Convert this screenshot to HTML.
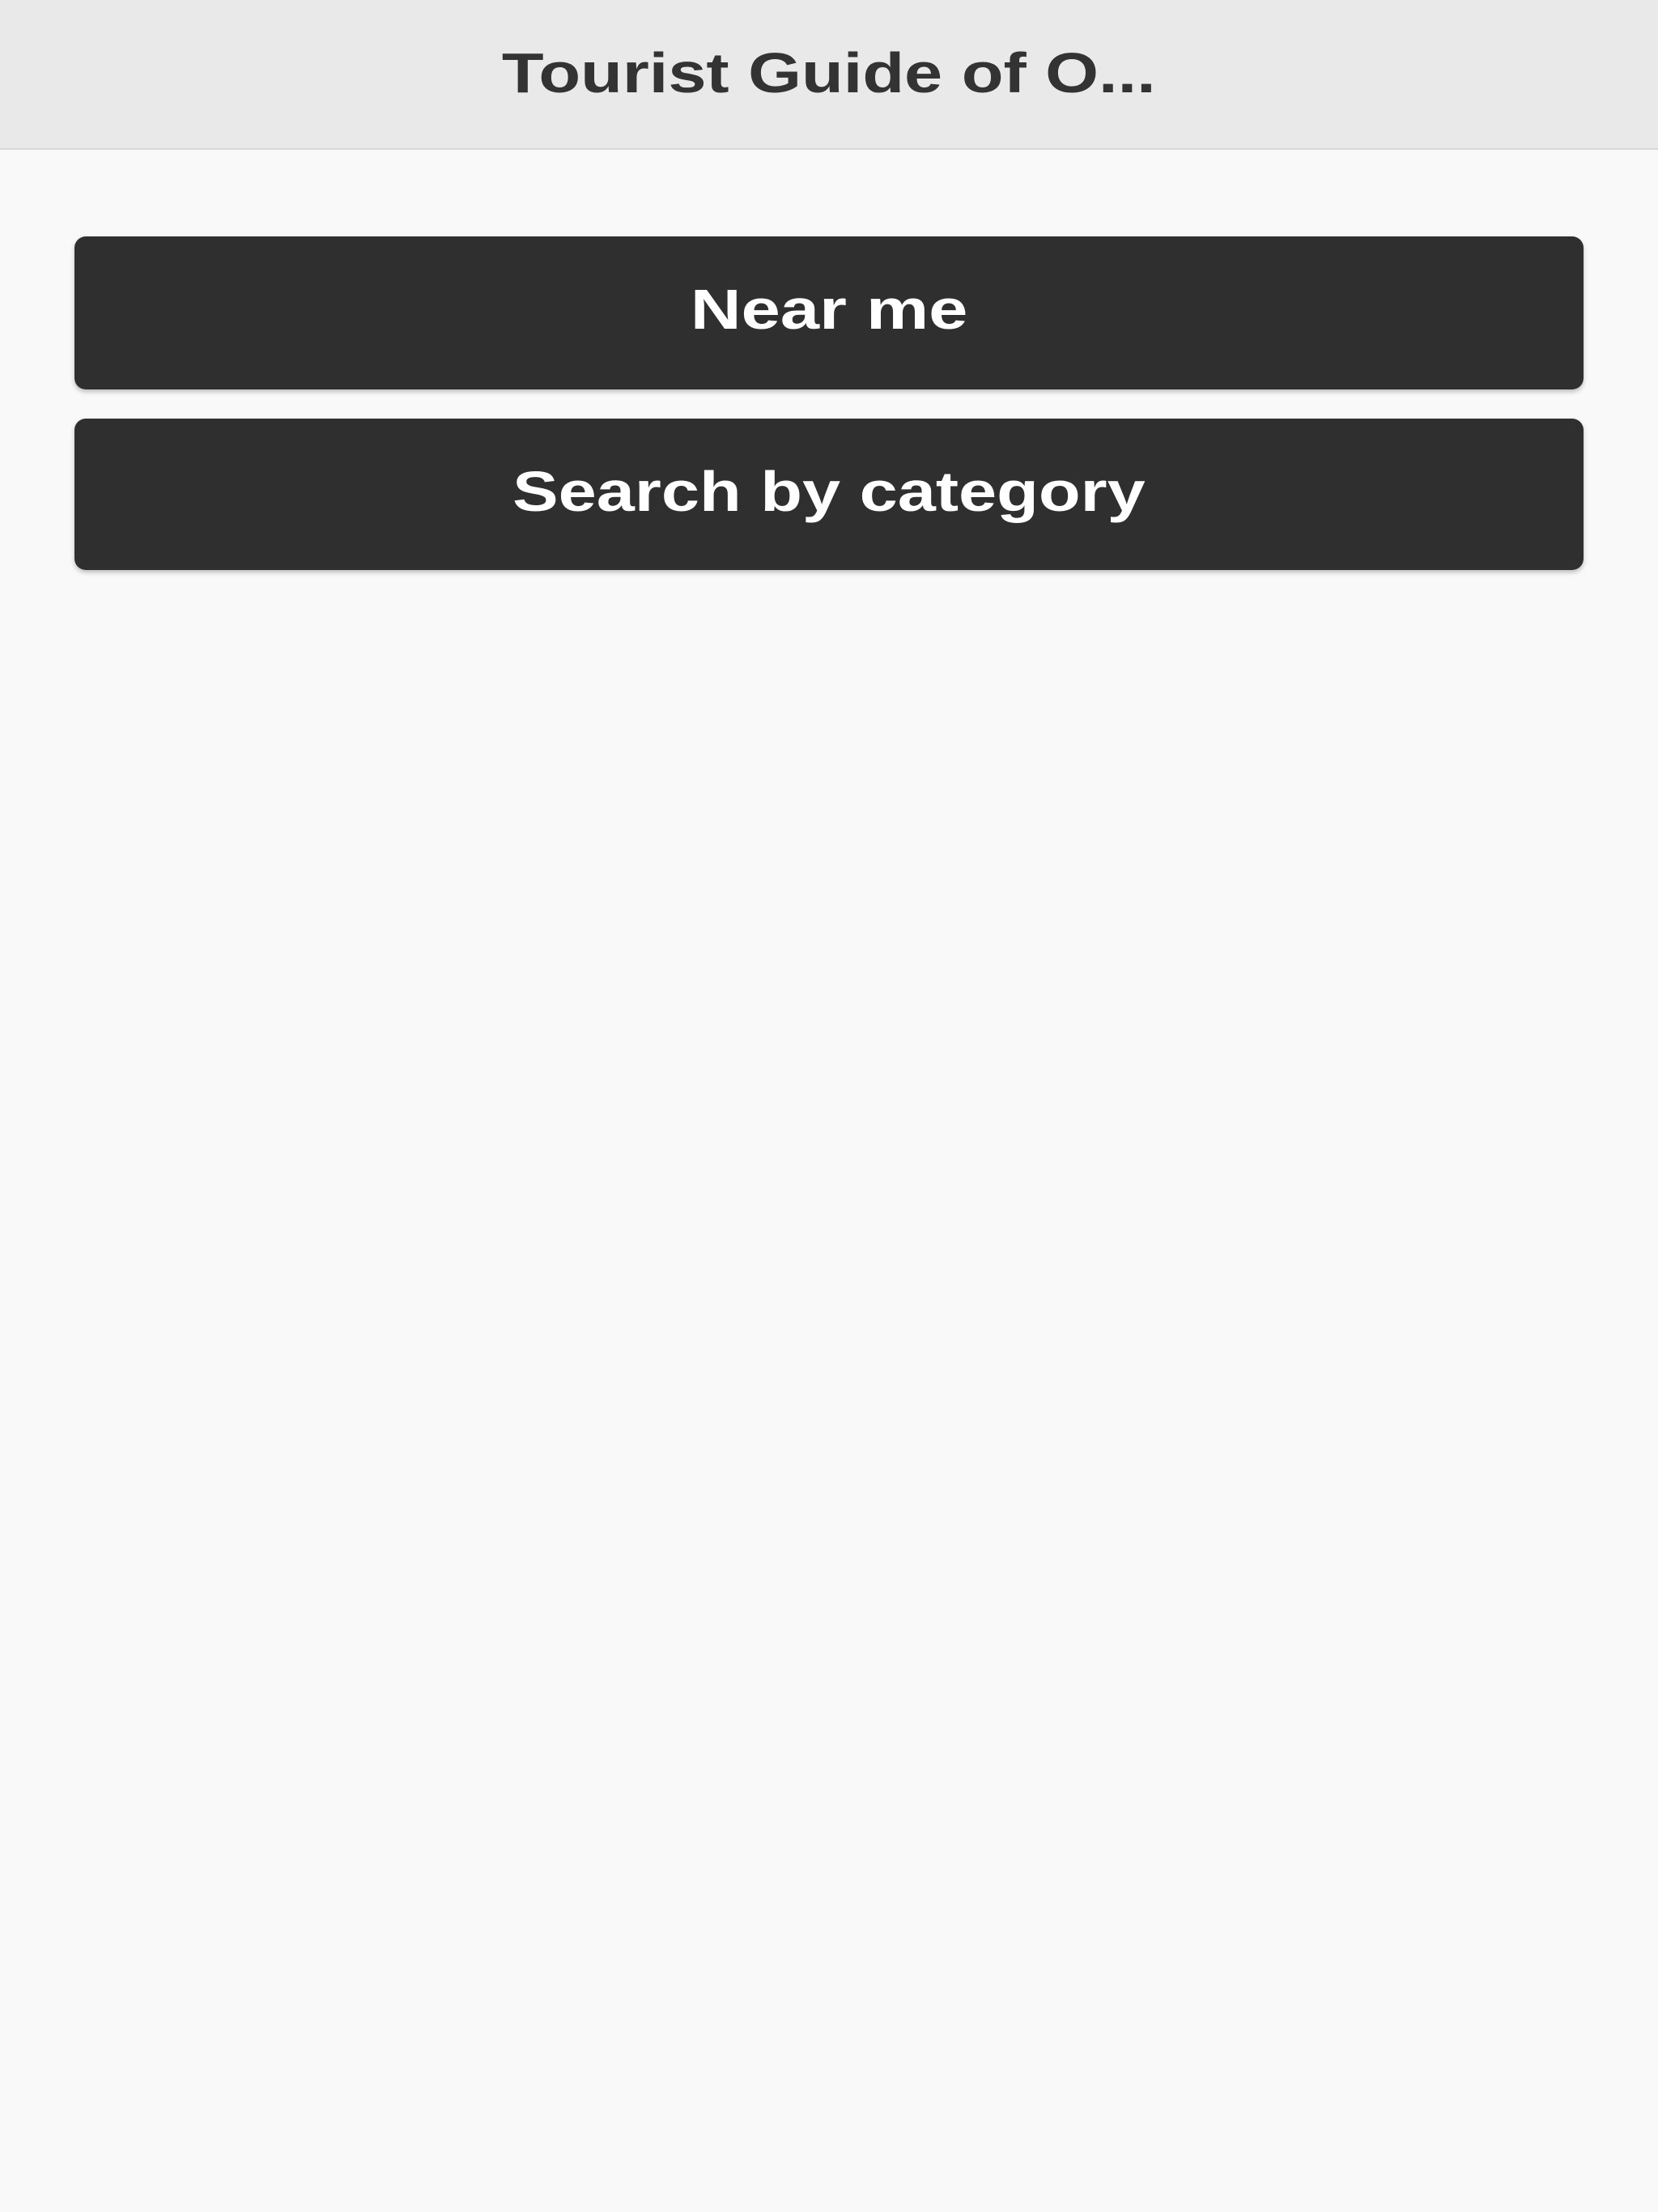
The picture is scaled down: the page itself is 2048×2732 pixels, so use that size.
<!DOCTYPE html>
<html><head><meta charset="utf-8"><style>
html,body{margin:0;padding:0;}
body{width:2048px;height:2732px;background:#f9f9f9;font-family:"Liberation Sans",sans-serif;overflow:hidden;position:relative;}
.hdr{position:absolute;left:0;top:0;width:2048px;height:185px;background:#e9e9e9;border-bottom:2px solid #d6d6d6;box-sizing:border-box;}
.hdr div{position:absolute;left:0;right:0;top:50px;text-align:center;font-weight:bold;font-size:70px;color:#333;}
.btn{position:absolute;left:92px;width:1864px;background:#2f2f2f;border-radius:14px;color:#fff;font-weight:bold;font-size:70px;text-align:center;box-shadow:0 3px 6px rgba(0,0,0,.25);}
.s{display:inline-block;transform-origin:center;}
</style></head><body>
<div class="hdr"><div><span class="s" style="transform:scaleX(1.21)">Tourist Guide of O...</span></div></div>
<div class="btn" style="top:292px;height:189px;line-height:181px;"><span class="s" style="transform:scaleX(1.24)">Near me</span></div>
<div class="btn" style="top:517px;height:187px;line-height:181px;"><span class="s" style="transform:scaleX(1.21)">Search by category</span></div>
</body></html>
